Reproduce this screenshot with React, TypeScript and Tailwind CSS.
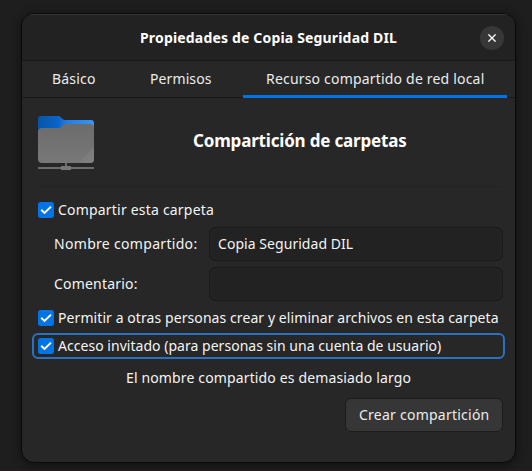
import React from "react";

function Check() {
  return (
    <svg className="block h-4 w-4 shrink-0" viewBox="0 0 16 16">
      <rect width="16" height="16" rx="2.5" fill="#0073e5" />
      <path d="M3.2 7.8 L6.5 10.9 L13 4.6" fill="none" stroke="#fff" strokeWidth="2" />
    </svg>
  );
}

function FolderIcon() {
  return (
    <svg className="block h-[56px] w-[58px] shrink-0" viewBox="0 0 58 56">
      <defs>
        <linearGradient id="back" x1="0" x2="1" y1="0" y2="0">
          <stop offset="0" stopColor="#0654aa" />
          <stop offset="0.36" stopColor="#0a64c9" />
          <stop offset="0.5" stopColor="#217cde" />
          <stop offset="1" stopColor="#3c94f5" />
        </linearGradient>
        <linearGradient id="front" x1="0" x2="0" y1="0" y2="1">
          <stop offset="0" stopColor="#6c6c6c" />
          <stop offset="1" stopColor="#787878" />
        </linearGradient>
        <linearGradient id="shine" x1="0" x2="1" y1="0" y2="1">
          <stop offset="0.45" stopColor="#7b7b7b" />
          <stop offset="1" stopColor="#828282" />
        </linearGradient>
        <clipPath id="body">
          <path d="M0 16 Q0 12 4 12 H20.5 Q22 12 23 11 L25.5 8.8 Q26.5 8 28 8 H52 Q56 8 56 12 V43 Q56 47 52 47 H4 Q0 47 0 43 Z" />
        </clipPath>
      </defs>
      <path d="M0 17 V3 Q0 0 3 0 H20 Q21.5 0 22.5 1 L24.5 3 Q25.5 4 27 4 H53 Q56 4 56 7 V17 Z" fill="url(#back)" />
      <g clipPath="url(#body)">
        <path d="M0 8 H56 V47 H0 Z" fill="url(#front)" />
        <path d="M56 31 V47 H40 Z" fill="url(#shine)" />
      </g>
      <path d="M27 47 h2 v3 h-2 z M0 51 h56 v2 h-56 z" fill="#6c6c6c" />
      <rect x="23" y="50" width="10" height="4" fill="#777" />
    </svg>
  );
}

const field =
  "box-border h-[34px] w-[294px] rounded-[6px] border border-[#1a1a1a] bg-[#222222] pl-2 leading-8 tracking-[0.05px] whitespace-nowrap";

export default function App() {
  return (
    <div className="flex h-[471px] w-[532px] overflow-hidden border-b border-[#291c20] bg-[#1e1e1e] pt-[13px] pl-[21px] font-['Noto_Sans',sans-serif] text-[14px] text-[#f4f4f4]">
      <div className="flex h-[450px] w-[495px] shrink-0 flex-col overflow-hidden rounded-[13px] border border-[#090909] bg-[#272727] shadow-[0_2px_10px_2px_rgba(0,0,0,0.35)]">
        <header className="flex h-[47px] shrink-0 items-center border-t border-b border-t-[#363636] border-b-[#191919] bg-[#222222]">
          <h1 className="ml-[118px] w-[270px] text-[14px] leading-5 font-bold tracking-[0.17px] whitespace-nowrap text-white">
            Propiedades de Copia Seguridad DIL
          </h1>
          <button className="ml-[70px] flex h-6 w-6 items-center justify-center rounded-full bg-[#373737]">
            <svg className="h-2 w-2" viewBox="0 0 8 8">
              <path d="M0.4 0.4 L7.6 7.6 M7.6 0.4 L0.4 7.6" stroke="#f5f5f5" strokeWidth="1.4" />
            </svg>
          </button>
        </header>
        <nav className="flex h-[37px] shrink-0 border-b border-[#191919] leading-[35px] whitespace-nowrap text-[#ececec]">
          <div className="w-[98px] pl-[30px] tracking-[0.2px]">Básico</div>
          <div className="w-[123px] pl-[30px] tracking-[0.1px]">Permisos</div>
          <div className="h-[37px] w-[264px] border-b-3 border-[#0073e5] pl-[23px] tracking-[0.19px]">
            Recurso compartido de red local
          </div>
        </nav>
        <main className="flex flex-col">
          <div className="ml-4 flex h-[89px] w-[465px] border-b border-[#232323] pt-[18px]">
            <FolderIcon />
            <h2 className="ml-[97px] h-[50px] text-[17px] leading-[50px] font-bold tracking-[-0.18px] whitespace-nowrap text-white">
              Compartición de carpetas
            </h2>
          </div>
          <div className="mt-[15px] ml-4 flex h-4 items-center gap-1 whitespace-nowrap">
            <Check />
            <span className="pb-[2px] tracking-[0.2px]">Compartir esta carpeta</span>
          </div>
          <div className="mt-[9px] ml-8 flex flex-col gap-[6px] whitespace-nowrap">
            <div className="flex leading-[34px]">
              <label className="w-[155px] tracking-[0.31px]">Nombre compartido:</label>
              <div className={field}>Copia Seguridad DIL</div>
            </div>
            <div className="flex leading-[34px]">
              <label className="w-[155px] tracking-[0.2px]">Comentario:</label>
              <div className={field} />
            </div>
          </div>
          <div className="mt-[9px] ml-4 flex h-4 items-center gap-1 whitespace-nowrap">
            <Check />
            <span className="pb-[2px] tracking-[0.08px]">
              Permitir a otras personas crear y eliminar archivos en esta carpeta
            </span>
          </div>
          <div className="mt-[7px] ml-[10px] flex h-[26px] w-[473px] items-center gap-1 rounded-[6px] border-2 border-[#2a72bf] pl-1 whitespace-nowrap">
            <Check />
            <span className="pb-[2px] tracking-[0.03px]">
              Acceso invitado (para personas sin una cuenta de usuario)
            </span>
          </div>
          <p className="mt-[9px] ml-[104px] leading-5 tracking-[0.14px] whitespace-nowrap">
            El nombre compartido es demasiado largo
          </p>
          <button className="mt-[10px] ml-[323px] h-[34px] w-[158px] rounded-[6px] border border-[#1c1c1c] bg-[#363636] pl-[13px] text-left leading-8 tracking-[0.24px] whitespace-nowrap text-[#ececec]">
            Crear compartición
          </button>
        </main>
      </div>
    </div>
  );
}
